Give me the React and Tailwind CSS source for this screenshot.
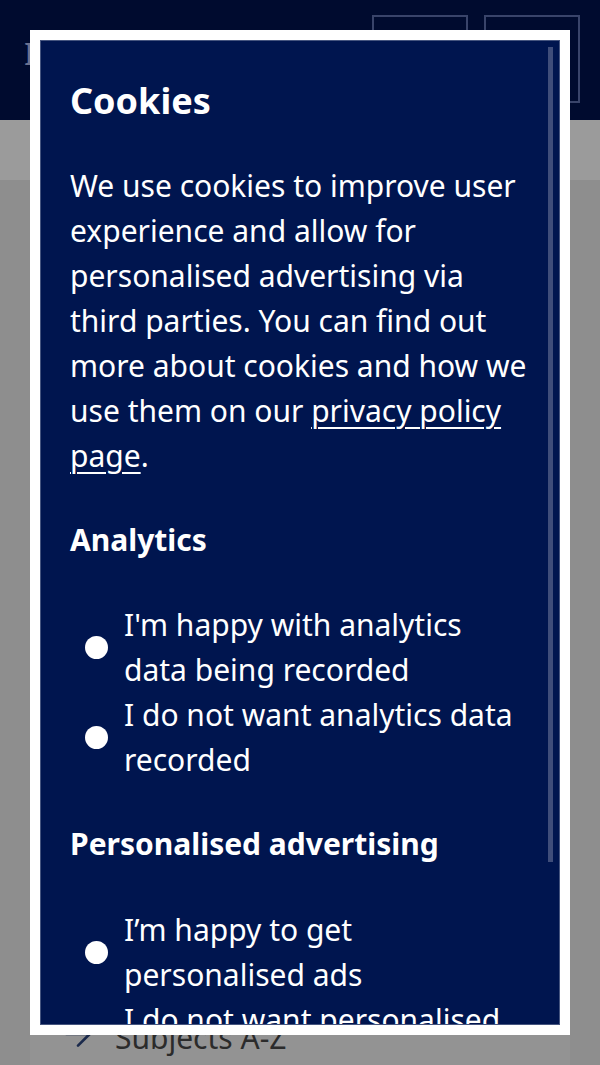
import React from 'react';
import { ArrowRight } from 'lucide-react';

// ─── RADIO OPTION ────────────────────────────────────────────────────────────

function RadioOption({ name, lines }) {
    return (
        <label className="flex items-center">
            <input
                type="radio"
                name={name}
                className="ml-[15px] mr-[16px] h-[23px] w-[23px] shrink-0 appearance-none rounded-full bg-white"
            />
            <span>
                {lines.map((line, i) => (
                    <span key={i} className="block">{line}</span>
                ))}
            </span>
        </label>
    );
}

// ─── MAIN COMPONENT ───────────────────────────────────────────────────────────

export default function App() {
    return (
        <div className="relative h-[1065px] w-[600px] overflow-hidden bg-[#8e8e8e] font-['Noto_Sans',sans-serif]">
            {/* page behind the dialog, already dimmed */}
            <header className="flex h-[120px] items-start bg-[#000b2f] pl-[24px] pr-[20px] pt-[15px]">
                <span className="mt-[24px] text-[30px] leading-[30px] text-[#6b7290]">I</span>
                <div className="flex-1" />
                <div className="flex gap-[16px]">
                    <button className="h-[88px] w-[96px] border-2 border-[#39446a]" />
                    <button className="h-[88px] w-[96px] border-2 border-[#39446a]" />
                </div>
            </header>
            <div className="h-[60px] bg-[#9b9b9b]" />
            <main className="mx-[30px] flex h-[885px] flex-col justify-end bg-[#939393] pb-[5px] pl-[28px]">
                <a className="flex items-center gap-[17px] text-[30px] leading-[45px] text-[#2b2b2b]">
                    <ArrowRight size={40} strokeWidth={1.6} className="-mt-[8px] text-[#1b2a4c]" />
                    Subjects A-Z
                </a>
            </main>

            {/* cookie dialog */}
            <div className="absolute left-[30px] top-[30px] h-[1005px] w-[540px] border-[10px] border-white bg-white">
                <div className="relative h-full overflow-hidden border border-[#46557f] bg-[#00154f] pl-[29px] pt-[33px] text-white">
                    <h2 className="text-[36px] font-bold leading-[54px]">Cookies</h2>
                    <p className="mt-[35px] text-[30px] leading-[45px]">
                        We use cookies to improve user<br />
                        experience and allow for<br />
                        personalised advertising via<br />
                        third parties. You can find out<br />
                        more about cookies and how we<br />
                        use them on our <a className="underline decoration-[2px] underline-offset-[5px]">privacy policy<br />
                        page</a>.
                    </p>

                    <h3 className="mt-[39px] text-[30px] font-bold leading-[45px]">Analytics</h3>
                    <div className="mt-[40px] text-[30px] leading-[45px]">
                        <RadioOption name="analytics" lines={["I'm happy with analytics", 'data being recorded']} />
                        <RadioOption name="analytics" lines={['I do not want analytics data', 'recorded']} />
                    </div>

                    <h3 className="mt-[39px] text-[30px] font-bold leading-[45px]">Personalised advertising</h3>
                    <div className="mt-[41px] text-[30px] leading-[45px]">
                        <RadioOption name="ads" lines={['I’m happy to get', 'personalised ads']} />
                        <RadioOption name="ads" lines={['I do not want personalised', 'ads']} />
                    </div>

                    {/* scrollbar thumb */}
                    <div className="absolute left-[507px] top-[6px] h-[815px] w-[5px] bg-[#3f4d7a]" />
                </div>
            </div>
        </div>
    );
}
